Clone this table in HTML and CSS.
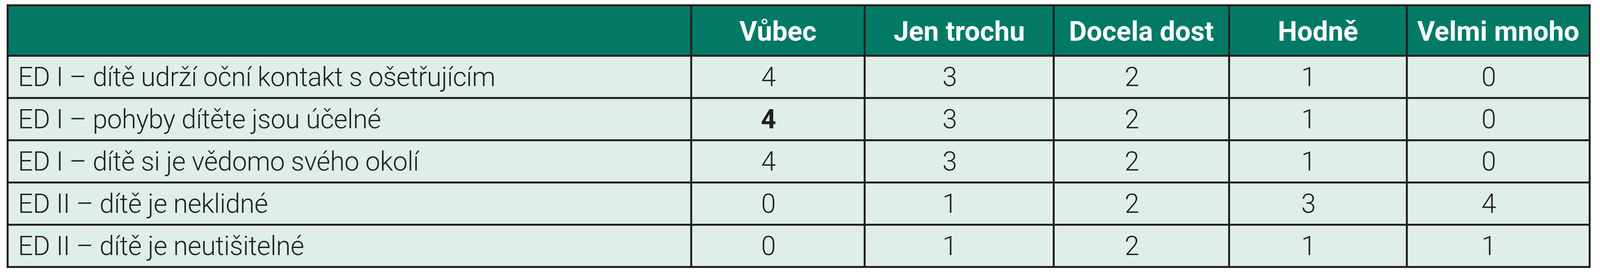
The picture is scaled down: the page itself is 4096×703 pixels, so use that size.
FILE: index.html
```html
<!DOCTYPE html>
<html lang="cs">
<head>
<meta charset="utf-8">
<title>ED škála</title>
<link rel="stylesheet" href="styles.css">
</head>
<body>
<div class="page">
  <div class="grid">
    <div class="cell head label"></div>
    <div class="cell head">Vůbec</div>
    <div class="cell head">Jen trochu</div>
    <div class="cell head">Docela dost</div>
    <div class="cell head">Hodně</div>
    <div class="cell head">Velmi mnoho</div>

    <div class="cell label">ED I – dítě udrží oční kontakt s ošetřujícím</div>
    <div class="cell num">4</div>
    <div class="cell num">3</div>
    <div class="cell num">2</div>
    <div class="cell num">1</div>
    <div class="cell num">0</div>

    <div class="cell label">ED I – pohyby dítěte jsou účelné</div>
    <div class="cell num strong">4</div>
    <div class="cell num">3</div>
    <div class="cell num">2</div>
    <div class="cell num">1</div>
    <div class="cell num">0</div>

    <div class="cell label">ED I – dítě si je vědomo svého okolí</div>
    <div class="cell num">4</div>
    <div class="cell num">3</div>
    <div class="cell num">2</div>
    <div class="cell num">1</div>
    <div class="cell num">0</div>

    <div class="cell label">ED II – dítě je neklidné</div>
    <div class="cell num">0</div>
    <div class="cell num">1</div>
    <div class="cell num">2</div>
    <div class="cell num">3</div>
    <div class="cell num">4</div>

    <div class="cell label">ED II – dítě je neutišitelné</div>
    <div class="cell num">0</div>
    <div class="cell num">1</div>
    <div class="cell num">2</div>
    <div class="cell num">1</div>
    <div class="cell num">1</div>
  </div>
</div>
</body>
</html>
```

FILE: styles.css
```css
html, body {
  margin: 0;
  padding: 0;
  background: #ffffff;
}

.page {
  padding: 11px 0 0 17px;
}

.grid {
  display: grid;
  width: max-content;
  grid-template-columns: 1745px 439px 479px 444px 450px 463px;
  grid-template-rows: 124px repeat(5, 103px);
  gap: 5px;
  padding: 5px;
  background: #231f20;
  font-family: Roboto, "Liberation Sans", sans-serif;
  color: #231f20;
}

.cell {
  display: flex;
  align-items: center;
  background: #dfeee8;
  font-size: 68px;
  font-weight: 300;
  letter-spacing: -0.6px;
  line-height: 1;
  white-space: nowrap;
}

.head {
  background: #027a66;
  color: #ffffff;
  font-size: 70px;
  font-weight: 700;
  letter-spacing: 0;
  justify-content: center;
  padding-top: 4px;
  box-sizing: border-box;
}

.label {
  padding-left: 24px;
  justify-content: flex-start;
}

.num {
  justify-content: center;
  padding-right: 49px;
}

.strong {
  font-weight: 700;
}
```
